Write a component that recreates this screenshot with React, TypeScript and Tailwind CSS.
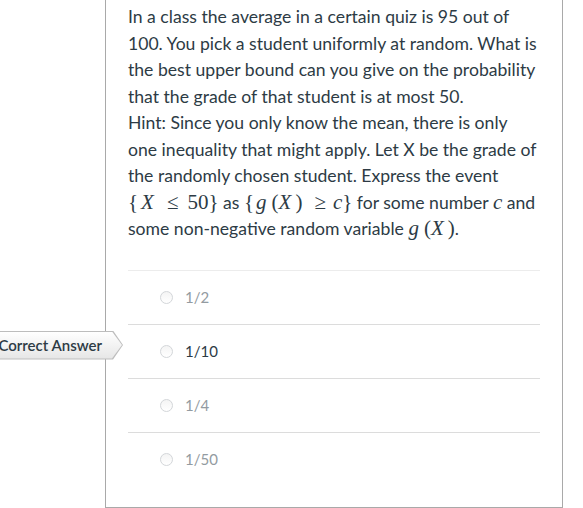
const ink = "text-[#2d3b45]";

function M({ children }: { children: React.ReactNode }) {
  return (
    <span className="font-['Liberation_Serif','Times_New_Roman',serif] text-[21px] leading-none">
      {children}
    </span>
  );
}

function I({ children, className = "" }: { children: React.ReactNode; className?: string }) {
  return <i className={className}>{children}</i>;
}

function S({ children, className = "" }: { children: React.ReactNode; className?: string }) {
  return <span className={className}>{children}</span>;
}

function Radio() {
  return (
    <span className="inline-block h-[13px] w-[13px] shrink-0 rounded-full border border-[#d3d6d9] bg-gradient-to-b from-[#f4f4f4] to-white" />
  );
}

function CorrectTag() {
  return (
    <div className="absolute left-[-142px] top-[6px] h-[29px] w-[137px] bg-[#bdbdbd] [clip-path:polygon(0_0,calc(100%-10px)_0,100%_50%,calc(100%-10px)_100%,0_100%)]">
      <div className="absolute inset-[1px] flex items-center justify-end bg-gradient-to-b from-white to-[#e6e6e6] pr-[20px] [clip-path:polygon(0_0,calc(100%-10px)_0,100%_50%,calc(100%-10px)_100%,0_100%)]">
        <span className="text-[15px] font-semibold text-[#2d3b45]">Correct Answer</span>
      </div>
    </div>
  );
}

const answers = [
  { text: "1/2", correct: false },
  { text: "1/10", correct: true },
  { text: "1/4", correct: false },
  { text: "1/50", correct: false },
];

export default function App() {
  return (
    <div className="relative h-[508px] w-[583px] overflow-hidden bg-white font-['Lato','Liberation_Sans',sans-serif]">
      <div className="ml-[105px] w-[458px] border-x border-b border-[#a9a9a9] px-[22px] pb-[21px] pt-[4px]">
        <div className={`text-[17.6px] leading-[26.5px] ${ink}`}>
          <p>
            In a class the average in a certain quiz is 95 out of 100. You pick a student uniformly at random. What is
            the best upper bound can you give on the probability that the grade of that student is at most 50.
          </p>
          <p>
            Hint: Since you only know the mean, there is only one inequality that might apply. Let X be the grade of
            the randomly chosen student. Express the event{" "}
            <M>
              {"{"}
              <I className="ml-[3px]">X</I>
              <S className="ml-[13px]">≤</S>
              <S className="ml-[9px]">50</S>
              {"}"}
            </M>{" "}
            as{" "}
            <M>
              {"{"}
              <I className="ml-[2px]">g</I>
              <S className="ml-[5px]">(</S>
              <I className="mr-[2px]">X</I>
              <S className="ml-[2px]">)</S>
              <S className="ml-[12px]">≥</S>
              <I className="ml-[7px]">c</I>
              {"}"}
            </M>{" "}
            for some number{" "}
            <M>
              <I>c</I>
            </M>{" "}
            and some non-negative random variable{" "}
            <M>
              <I>g</I>
              <S className="ml-[5px]">(</S>
              <I className="mr-[2px]">X</I>
              <S className="ml-[2px]">)</S>
            </M>
            .
          </p>
        </div>

        <div className="mt-[27px]">
          {answers.map((a, i) => (
            <div
              key={a.text}
              className={`relative flex h-[54px] items-center gap-[12px] border-t pl-[32px] ${
                i === 0 ? "border-[#ececec]" : "border-[#dcdcdc]"
              }`}
            >
              {a.correct && <CorrectTag />}
              <Radio />
              <span className={`text-[15px] ${a.correct ? ink : "text-[#939ba1]"}`}>{a.text}</span>
            </div>
          ))}
        </div>
      </div>
    </div>
  );
}
